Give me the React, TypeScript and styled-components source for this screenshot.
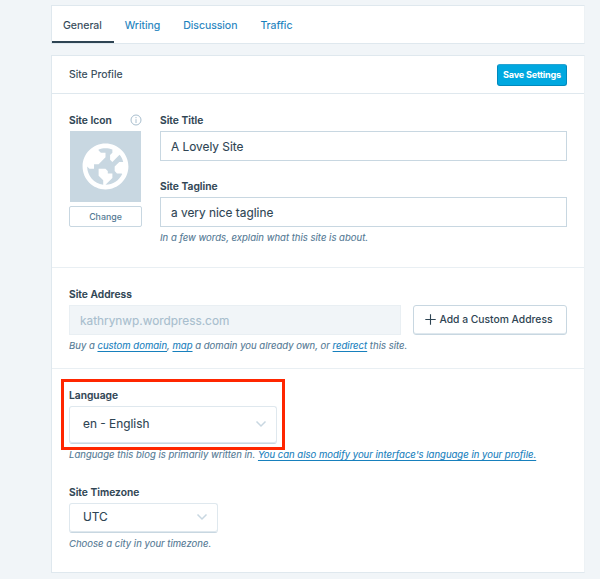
import React from "react";
import styled, { createGlobalStyle } from "styled-components";

const ink = "#2e4453";
const link = "#1780bd";
const line = "#dfe8ee";
const edge = "#c8d7e1";

const GlobalStyle = createGlobalStyle`
  *, *::before, *::after { box-sizing: border-box; }
  body {
    margin: 0;
    height: 579px;
    overflow: hidden;
    background: #f1f5f8;
    color: ${ink};
    font-family: Inter, "Liberation Sans", sans-serif;
    font-weight: 400;
    -webkit-text-stroke: 0.1px;
  }
  button {
    font-family: inherit;
    -webkit-text-stroke: 0;
  }
`;

const Page = styled.main`
  width: 534px;
  margin-left: 51px;
  padding-top: 5px;
`;

const Panel = styled.section`
  background: #fff;
  border: 1px solid ${line};
  border-right-color: #edf2f5;
`;

const TabBar = styled(Panel)`
  display: flex;
  height: 39px;
  margin-bottom: 11px;
`;

const Tab = styled.a<{ $active?: boolean }>`
  height: 37px;
  padding: 0 12px 0 11px;
  line-height: 39px;
  font-size: 10.6px;
  letter-spacing: -0.03px;
  white-space: nowrap;
  color: ${(p) => (p.$active ? ink : link)};
  box-shadow: ${(p) => (p.$active ? `inset 0 -2px 0 ${ink}` : "none")};
`;

const Card = styled(Panel)`
  height: 518px;
`;

const CardHeader = styled.header`
  display: flex;
  align-items: center;
  justify-content: space-between;
  height: 38px;
  padding: 0 17px;
  border-bottom: 1px solid ${line};
  font-size: 10.5px;
`;

const SaveButton = styled.button`
  width: 70px;
  height: 22px;
  padding: 0;
  border: 1px solid #0089bd;
  border-top-color: #27a3d2;
  border-radius: 3px;
  background: #00a8e0;
  color: #fff;
  font-size: 9.1px;
  font-weight: 700;
  letter-spacing: -0.2px;
  white-space: nowrap;
`;

const Section = styled.section<{ $height: number; $last?: boolean }>`
  height: ${(p) => p.$height}px;
  padding: 19px 17px 0;
  border-bottom: ${(p) => (p.$last ? "none" : "1px solid #e9eff3")};
`;

const ProfileSection = styled(Section)`
  display: grid;
  grid-template-columns: 73px 407px;
  column-gap: 18px;
`;

const Label = styled.div`
  display: flex;
  align-items: center;
  justify-content: space-between;
  height: 14px;
  margin-bottom: 4px;
  font-size: 10.25px;
  font-weight: 600;
  white-space: nowrap;
`;

const SiteIcon = styled.div`
  display: grid;
  place-items: center;
  width: 71px;
  height: 71px;
  margin: 0 0 4px 1px;
  background: ${edge};
`;

const ChangeButton = styled.button`
  display: block;
  width: 73px;
  height: 21px;
  padding: 0;
  border: 1px solid ${edge};
  border-radius: 2px;
  background: #fff;
  color: #537994;
  font-size: 8.8px;
  font-weight: 500;
`;

const Input = styled.div<{ $disabled?: boolean }>`
  height: 30px;
  padding: 0 10px;
  border: 1px solid ${(p) => (p.$disabled ? "#e9eff3" : edge)};
  background: ${(p) => (p.$disabled ? "#f1f5f8" : "#fff")};
  color: ${(p) => (p.$disabled ? "#a8bece" : ink)};
  line-height: 30px;
  font-size: 11.85px;
  white-space: nowrap;
`;

const Field = styled.div<{ $top?: number }>`
  margin-top: ${(p) => p.$top ?? 0}px;
`;

const Help = styled.p`
  margin: 4px 0 0;
  height: 14px;
  line-height: 14px;
  font-size: 9.54px;
  font-style: italic;
  color: #537994;
  white-space: nowrap;
`;

const Link = styled.a`
  color: ${link};
  text-decoration: underline;
  text-decoration-thickness: 1px;
  text-underline-offset: 2px;
  text-decoration-skip-ink: none;
`;

const AddressRow = styled.div`
  display: grid;
  grid-template-columns: 332px 154px;
  column-gap: 12px;
`;

const AddButton = styled.button`
  display: flex;
  align-items: center;
  justify-content: center;
  gap: 4px;
  height: 30px;
  padding: 0 3px 2px 0;
  border: 1px solid ${edge};
  border-radius: 3px;
  box-shadow: inset 0 -1px 0 ${line};
  background: #fff;
  color: ${ink};
  font-size: 10.3px;
  font-weight: 550;
  white-space: nowrap;
`;

const Select = styled.div<{ $width: number; $height: number }>`
  display: flex;
  align-items: center;
  justify-content: space-between;
  width: ${(p) => p.$width}px;
  height: ${(p) => p.$height}px;
  padding: 0 9px 2px 13px;
  border: 1px solid ${line};
  border-bottom-color: ${edge};
  border-radius: 3px;
  box-shadow: inset 0 -1px 0 ${line};
  font-size: 11.85px;
`;

const LanguageField = styled.div`
  position: relative;
`;

const Highlight = styled.div`
  position: absolute;
  left: -8px;
  top: -9px;
  width: 224px;
  height: 71px;
  border: 3px solid #ff2600;
`;

const Globe = () => (
  <svg width="55" height="55" viewBox="0 0 24 24" fill="#fff">
    <path d="M12 2C6.477 2 2 6.477 2 12s4.477 10 10 10 10-4.477 10-10S17.523 2 12 2zm0 18l2-2 1-1v-2h-2v-1l-1-1H9v3l2 2v1.93c-3.94-.494-7-3.858-7-7.93l1 1h2v-2h2l3-3V6h-2L9 5v-.41C9.927 4.21 10.94 4 12 4s2.073.212 3 .59V6l-1 1v2l1 1 3.13-3.13c.752.897 1.304 1.964 1.606 3.13H18l-2 2v2l1 1h2l.286.286C18.03 18.06 15.24 20 12 20z" />
  </svg>
);

const Info = () => (
  <svg width="12" height="12" viewBox="0 0 12 12" fill="none" stroke="#a8bece">
    <circle cx="6" cy="6" r="5" />
    <path d="M6 5.2V9M6 3v1.2" />
  </svg>
);

const Plus = () => (
  <svg width="11" height="11" viewBox="0 0 11 11" fill="none" stroke={ink} strokeWidth="1.1">
    <path d="M5.5 0.3v10.4M0.3 5.5h10.4" />
  </svg>
);

const Chevron = () => (
  <svg width="12" height="8" viewBox="0 0 12 8" fill="none" stroke={edge} strokeWidth="1.5">
    <path d="M1.5 1.5L6 6l4.5-4.5" />
  </svg>
);

export default function App() {
  return (
    <>
      <GlobalStyle />
      <Page>
        <TabBar as="nav">
          <Tab $active>General</Tab>
          <Tab>Writing</Tab>
          <Tab>Discussion</Tab>
          <Tab>Traffic</Tab>
        </TabBar>
        <Card>
          <CardHeader>
            Site Profile
            <SaveButton>Save Settings</SaveButton>
          </CardHeader>
          <ProfileSection $height={174}>
            <div>
              <Label>
                Site Icon
                <Info />
              </Label>
              <SiteIcon>
                <Globe />
              </SiteIcon>
              <ChangeButton>Change</ChangeButton>
            </div>
            <div>
              <Label>Site Title</Label>
              <Input>A Lovely Site</Input>
              <Field $top={18}>
                <Label>Site Tagline</Label>
                <Input>a very nice tagline</Input>
                <Help>In a few words, explain what this site is about.</Help>
              </Field>
            </div>
          </ProfileSection>
          <Section $height={101}>
            <Label>Site Address</Label>
            <AddressRow>
              <Input $disabled>kathrynwp.wordpress.com</Input>
              <AddButton>
                <Plus />
                Add a Custom Address
              </AddButton>
            </AddressRow>
            <Help>
              Buy a <Link>custom domain</Link>, <Link>map</Link> a domain you already own, or{" "}
              <Link>redirect</Link> this site.
            </Help>
          </Section>
          <Section $height={203} $last>
            <LanguageField>
              <Label>Language</Label>
              <Select $width={208} $height={38}>
                en - English
                <Chevron />
              </Select>
              <Help>
                Language this blog is primarily written in.{" "}
                <Link>You can also modify your interface's language in your profile.</Link>
              </Help>
              <Highlight />
            </LanguageField>
            <Field $top={23}>
              <Label>Site Timezone</Label>
              <Select $width={149} $height={30}>
                UTC
                <Chevron />
              </Select>
              <Help>Choose a city in your timezone.</Help>
            </Field>
          </Section>
        </Card>
      </Page>
    </>
  );
}
